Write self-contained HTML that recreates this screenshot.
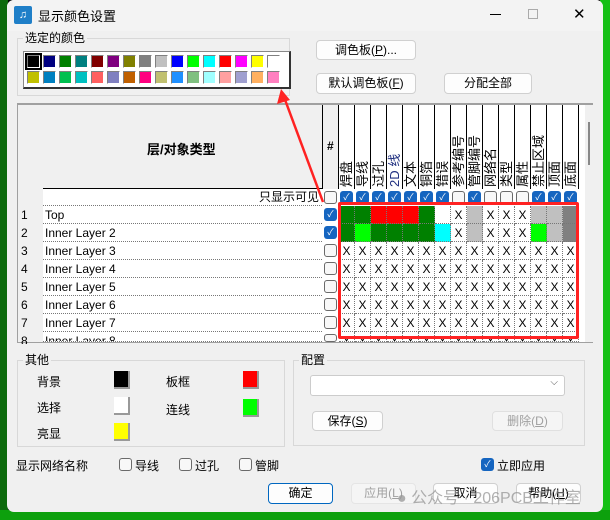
<!DOCTYPE html>
<html><head><meta charset="utf-8">
<style>
*{box-sizing:border-box;margin:0;padding:0}
body{width:610px;height:520px;overflow:hidden;background:#050505;font-family:"Liberation Sans","Noto Sans CJK SC",sans-serif;font-size:12px;color:#000;position:relative}
.a{position:absolute}
.dlg{left:7px;top:0;width:596px;height:512px;background:#f0f0f0;border-radius:7px;overflow:hidden}
.title{left:0;top:0;width:596px;height:31px;background:#f3f3f3}
.btn{position:absolute;background:#fdfdfd;border:1px solid #d0d0d0;border-radius:4px;text-align:center;font-size:12px;line-height:18px}
.grp{position:absolute;border:1px solid #d8d8d8}
.gl{position:absolute;background:#f0f0f0;padding:0 2px;font-size:12px;line-height:14px}
.sw{position:absolute;width:13px;height:13px;border-top:1px solid #808080;border-left:1px solid #808080;border-right:1px solid #fff;border-bottom:1px solid #fff}
.cb{position:absolute;width:13px;height:13px;border:1px solid #6a6a6a;border-radius:3px;background:#f8f8f8}
.cc{position:absolute;width:13px;height:13px;border-radius:3px;background:#1565c0;color:#fff;font-size:9px;line-height:13px;text-align:center}
.vh{position:absolute;white-space:nowrap;font-size:13px;line-height:16px;height:16px;left:0;top:82px;transform-origin:0 0;transform:rotate(-90deg)}
.cell{position:absolute;width:16px;height:18px;border-right:1px dotted #777;border-bottom:1px dotted #777;text-align:center;font-size:12px;line-height:18px}
.rn{position:absolute;left:4px;font-size:12px}
.ln{position:absolute;left:28px;width:279px;height:18px;border-bottom:1px dotted #777;font-size:12px;line-height:18px;padding-left:2px;background:#fff}
</style></head><body>
<div class="a" style="left:0;top:0;width:8px;height:520px;background:#0c6a0c"></div>
<div class="a" style="left:600px;top:0;width:10px;height:520px;background:#16c016"></div>
<div class="a" style="left:0;top:510px;width:610px;height:10px;background:#0da00d"></div>
<div class="a dlg">
 <div class="a title"></div>
 <div class="a" style="left:7px;top:6px;width:18px;height:18px;background:#1f7fc8;border-radius:2px;color:#fff;font-size:11px;line-height:18px;text-align:center">♫</div>
 <div class="a" style="left:31px;top:6px;font-size:13px">显示颜色设置</div>
 <div class="a" style="left:483px;top:14px;width:11px;height:1px;background:#000"></div>
 <div class="a" style="left:521px;top:9px;width:10px;height:10px;border:1px solid #aaa"></div>
 <div class="a" style="left:566px;top:5px;font-size:15px">✕</div>

 <div class="grp" style="left:10px;top:38px;width:273px;height:58px"></div>
 <div class="gl" style="left:16px;top:31px">选定的颜色</div>
 <div class="a" style="left:16px;top:51px;width:268px;height:38px;background:#fff;border:1px solid #888;border-right:2px solid #333;border-bottom:2px solid #333"></div>
 <div id="pal"></div>

 <div class="btn" style="left:309px;top:40px;width:100px;height:20px">调色板(<u>P</u>)...</div>
 <div class="btn" style="left:309px;top:73px;width:100px;height:21px">默认调色板(<u>F</u>)</div>
 <div class="btn" style="left:437px;top:73px;width:88px;height:21px">分配全部</div>

 <div class="a" style="left:10px;top:103px;width:576px;height:240px;background:#fff;border:1px solid #a0a0a0;border-top:2px solid #a0a0a0"></div>
 <div class="a" style="left:11px;top:105px;width:25px;height:237px;background:#f0f0f0"></div>
 <div class="a" style="left:36px;top:105px;width:279px;height:84px;background:#f0f0f0;border-bottom:1px solid #000"></div>
 <div class="a" style="left:140px;top:139px;font-weight:bold;font-size:13px">层/对象类型</div>
 <div class="a" style="left:315px;top:105px;width:17px;height:84px;background:#f0f0f0;border-left:1px solid #000;border-right:1px solid #000"></div>
 <div class="a" style="left:320px;top:139px;font-weight:bold;font-size:12px">#</div>
 <div class="a" style="left:332px;top:105px;width:240px;height:84px;background:#fff"></div>
 <div id="hdr"></div>
 <div class="a" style="left:578px;top:105px;width:8px;height:237px;background:#f0f0f0"></div>
 <div class="a" style="left:581px;top:122px;width:2px;height:43px;background:#888"></div>
 <div class="a" style="left:36px;top:189px;width:279px;height:17px;border-bottom:1px dotted #777;text-align:right;padding-right:3px;font-size:12px;line-height:17px;background:#fff">只显示可见</div>
 <div id="rows"></div>
 <div class="a" style="left:331px;top:202px;width:241px;height:137px;border:3px solid #f22;border-radius:2px"></div>
 <svg class="a" style="left:0;top:0" width="596" height="512"><line x1="316" y1="202" x2="277" y2="97" stroke="#f22" stroke-width="2.5"/><polygon points="274,89 270,104 283,100" fill="#f22"/></svg>

 <div class="grp" style="left:10px;top:360px;width:268px;height:87px"></div>
 <div class="gl" style="left:16px;top:353px">其他</div>
 <div class="a" style="left:30px;top:373px">背景</div><div class="a" style="left:107px;top:371px;width:16px;height:18px;background:#000;border-right:2px solid #999;border-bottom:2px solid #999"></div>
 <div class="a" style="left:30px;top:399px">选择</div><div class="a" style="left:107px;top:397px;width:16px;height:18px;background:#fff;border-right:2px solid #999;border-bottom:2px solid #999"></div>
 <div class="a" style="left:30px;top:425px">亮显</div><div class="a" style="left:107px;top:423px;width:16px;height:18px;background:#ff0;border-right:2px solid #999;border-bottom:2px solid #999"></div>
 <div class="a" style="left:159px;top:373px">板框</div><div class="a" style="left:236px;top:371px;width:16px;height:18px;background:#f00;border-right:2px solid #999;border-bottom:2px solid #999"></div>
 <div class="a" style="left:159px;top:401px">连线</div><div class="a" style="left:236px;top:399px;width:16px;height:18px;background:#0f0;border-right:2px solid #999;border-bottom:2px solid #999"></div>
 <div class="grp" style="left:286px;top:360px;width:292px;height:86px"></div>
 <div class="gl" style="left:292px;top:353px">配置</div>
 <div class="a" style="left:303px;top:375px;width:255px;height:21px;background:#fff;border:1px solid #ccc;border-radius:3px"><span style="position:absolute;right:6px;top:1px;font-size:10px;color:#555">⌵</span></div>
 <div class="btn" style="left:305px;top:411px;width:71px;height:20px">保存(<u>S</u>)</div>
 <div class="btn" style="left:485px;top:411px;width:71px;height:20px;color:#a0a0a0;background:#f5f5f5;border-color:#e0e0e0">删除(<u>D</u>)</div>

 <div class="a" style="left:9px;top:457px">显示网络名称</div>
 <div class="cb" style="left:112px;top:458px"></div><div class="a" style="left:128px;top:457px">导线</div>
 <div class="cb" style="left:172px;top:458px"></div><div class="a" style="left:188px;top:457px">过孔</div>
 <div class="cb" style="left:232px;top:458px"></div><div class="a" style="left:248px;top:457px">管脚</div>
 <div class="cc" style="left:474px;top:458px">✓</div><div class="a" style="left:490px;top:457px">立即应用</div>

 <div class="btn" style="left:261px;top:483px;width:65px;height:21px;border:1px solid #0067c0">确定</div>
 <div class="btn" style="left:344px;top:483px;width:65px;height:21px;color:#a0a0a0;background:#f5f5f5;border-color:#e5e5e5">应用(<u>L</u>)</div>
 <div class="btn" style="left:426px;top:483px;width:65px;height:21px">取消</div>
 <div class="btn" style="left:509px;top:483px;width:65px;height:21px">帮助(<u>H</u>)</div>
 <div class="a" style="left:390px;top:484px;font-size:16px;color:rgba(150,150,150,0.75)">● 公众号 · 206PCB工作室</div>
</div>
<script>
var P=["#000","#000080","#008000","#008080","#800000","#800080","#808000","#808080","#c0c0c0","#0000ff","#00ff00","#00ffff","#ff0000","#ff00ff","#ffff00","#ffffff",
"#c0c000","#0080c0","#00c050","#00c0c0","#ff6060","#8080c0","#c06000","#ff0080","#c0c070","#2090ff","#80c080","#a0ffff","#ffa0a0","#a0a0d0","#ffb060","#ff80c0"];
var h="";for(var i=0;i<32;i++){var x=20+(i%16)*16,y=i<16?55:71;h+='<div class="sw" style="left:'+x+'px;top:'+y+'px;background:'+P[i]+'"></div>';}
h+='<div class="a" style="left:18px;top:53px;width:17px;height:17px;border:2px solid #000"></div>';
document.getElementById("pal").innerHTML=h;
var H=["焊盘","导线","过孔","2D 线","文本","铜箔","错误","参考编号","管脚编号","网络名","类型","属性","禁止区域","顶面","底面"];
var HC=[1,1,1,1,1,1,1,0,1,0,0,0,1,1,1];
h="";for(i=0;i<15;i++){var x=332+i*16;h+='<div class="a" style="left:'+x+'px;top:105px;width:16px;height:84px;border-right:1px solid #000"><div class="vh" style="'+(i==3?'color:#203080;':'')+'">'+H[i]+'</div></div>';
h+=HC[i]?'<div class="cc" style="left:'+(x+1)+'px;top:191px">✓</div>':'<div class="cb" style="left:'+(x+1)+'px;top:191px"></div>';}
h+='<div class="cb" style="left:317px;top:191px"></div>';
document.getElementById("hdr").innerHTML=h;
var G="#008000",R="#ff0000",L="#00ff00",S="#c0c0c0",D="#808080";
var R1=[G,G,R,R,R,G,"#fff","X",S,"X","X","X",S,S,D];
var R2=[G,L,G,G,G,G,"#0ff","X",S,"X","X","X",L,S,D];
var names=["Top","Inner Layer 2","Inner Layer 3","Inner Layer 4","Inner Layer 5","Inner Layer 6","Inner Layer 7","Inner Layer 8"];
h="";for(var r=0;r<8;r++){var y=206+r*18;if(y>340)break;var hh=Math.min(18,342-y);
h+='<div class="rn" style="left:14px;top:'+(y+2)+'px;height:'+hh+'px;overflow:hidden">'+(r+1)+'</div>';
h+='<div class="ln" style="left:36px;top:'+y+'px;height:'+hh+'px;overflow:hidden">'+names[r]+'</div>';
h+=(r<2)?'<div class="cc" style="left:317px;top:'+(y+2)+'px">✓</div>':'<div class="cb" style="left:317px;top:'+(y+2)+'px;height:'+Math.min(13,hh-2)+'px"></div>';
for(i=0;i<15;i++){var v=r==0?R1[i]:r==1?R2[i]:"X";var st='left:'+(332+i*16)+'px;top:'+y+'px;height:'+hh+'px;overflow:hidden;';
if(v=="X")h+='<div class="cell" style="'+st+'background:#fff">X</div>';else h+='<div class="cell" style="'+st+'background:'+v+'"></div>';}}
document.getElementById("rows").innerHTML=h;
</script>
</body></html>
